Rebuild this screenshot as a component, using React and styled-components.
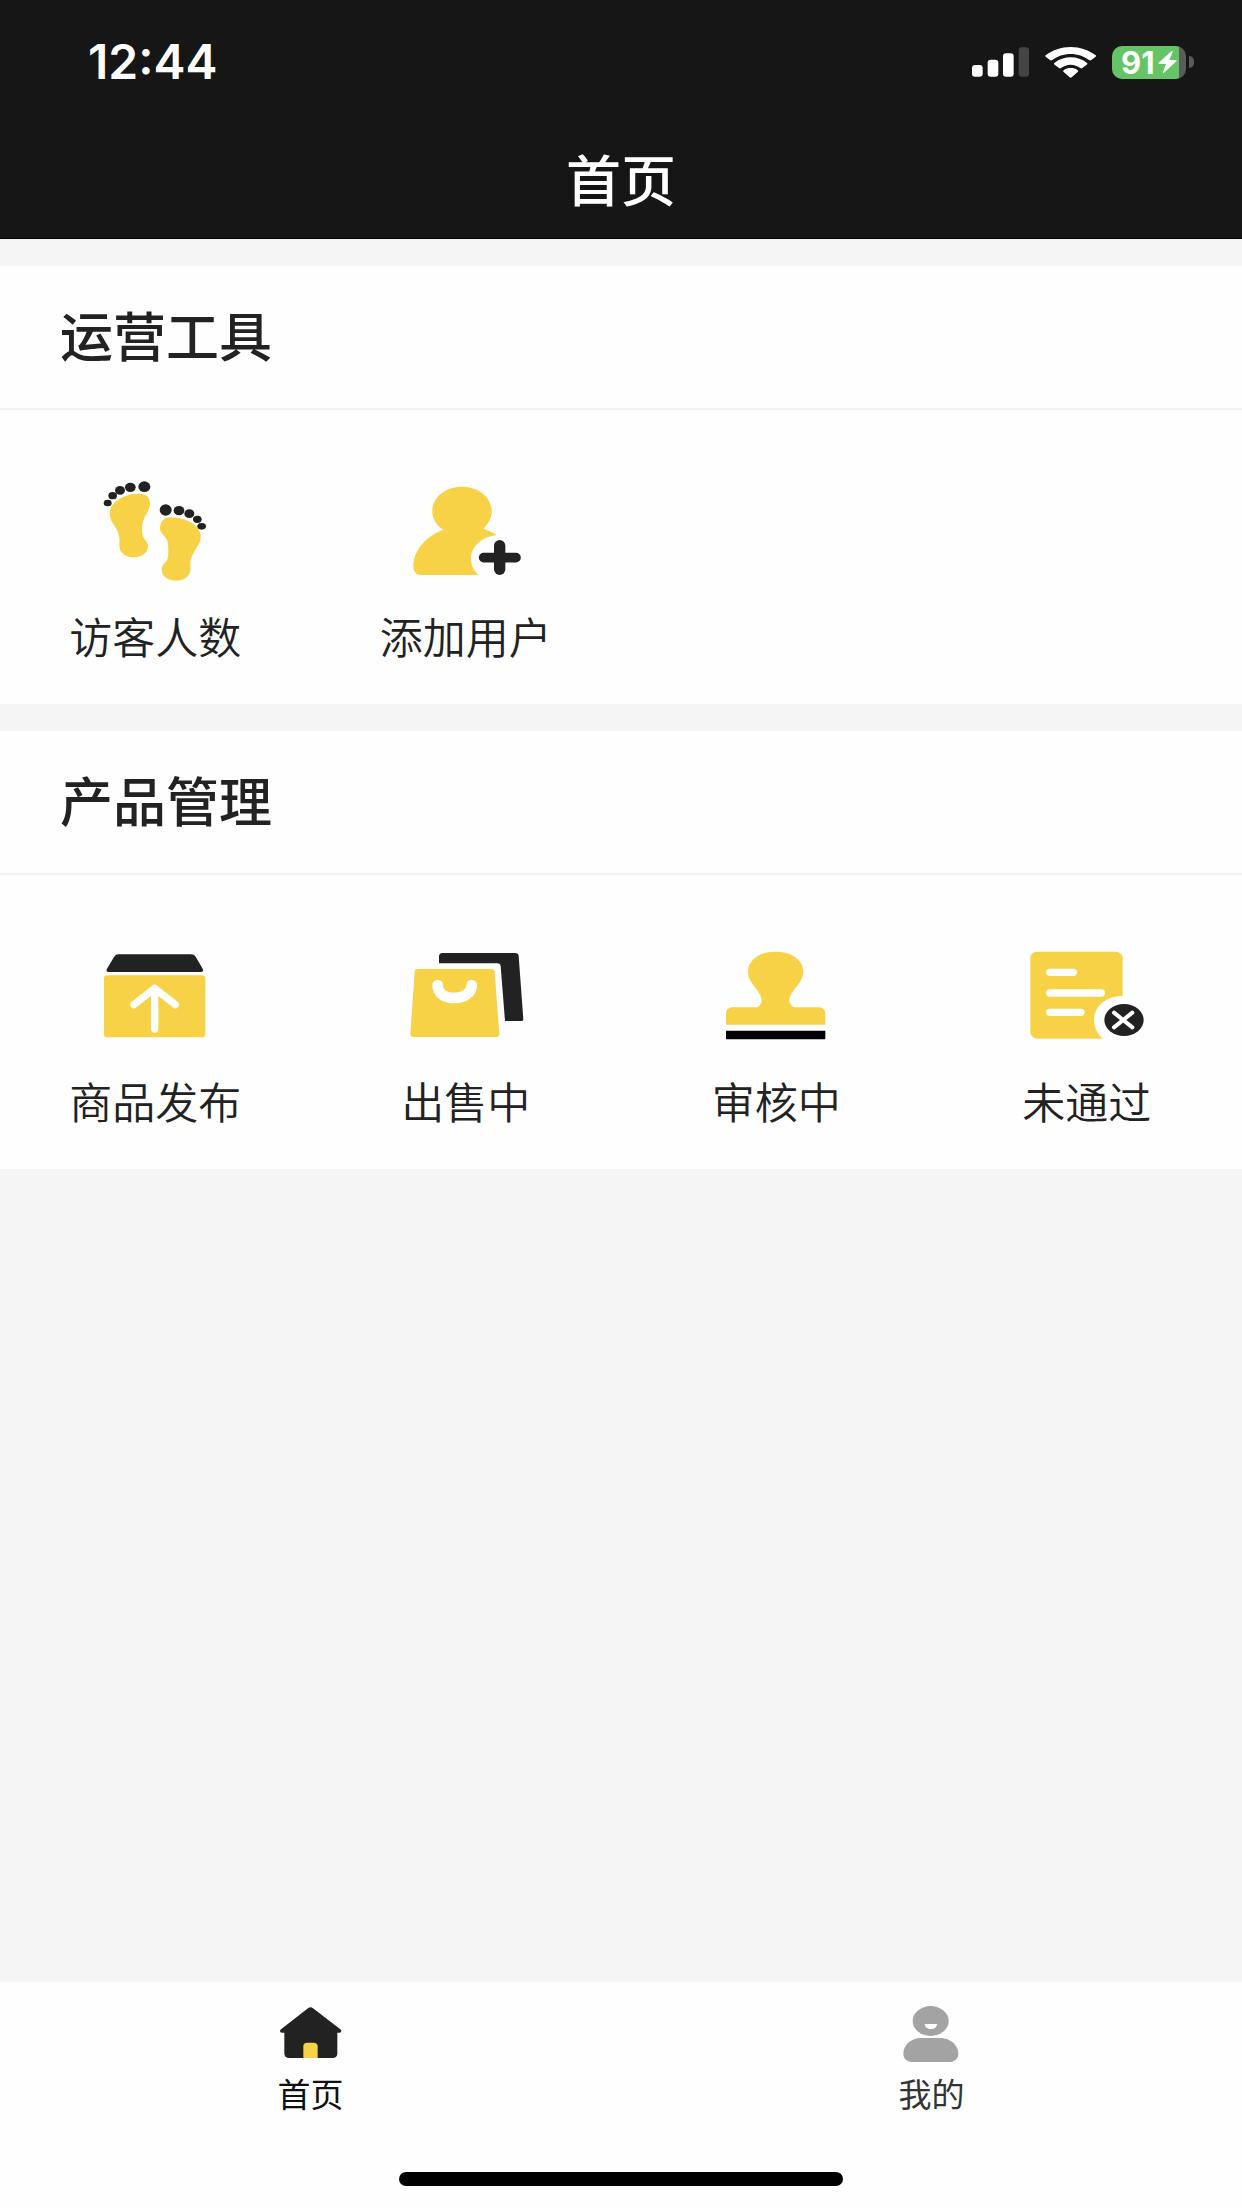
import { useState } from 'react';
import styled, { createGlobalStyle } from 'styled-components';

const GlobalStyle = createGlobalStyle`
  * {
    box-sizing: border-box;
  }

  body {
    margin: 0;
    background: #f5f5f5;
    color: #222;
    font-family: 'Noto Sans CJK SC', 'Noto Sans', sans-serif;
  }
`;

const Page = styled.div`
  min-height: 100vh;
  display: flex;
  flex-direction: column;
`;

const Header = styled.header`
  background: #161616;
  color: #fff;
  border-bottom: 1px solid #000;
`;

const StatusBar = styled.div`
  display: flex;
  align-items: center;
  justify-content: space-between;
  height: 124px;
  padding: 0 48px 0 88px;
  font-family: Inter, 'Liberation Sans', sans-serif;
`;

const Time = styled.time`
  font-size: 48px;
  font-weight: 600;
  line-height: 48px;
`;

const StatusIcons = styled.div`
  display: flex;
  align-items: center;
  gap: 16px;
`;

const Battery = styled.div`
  display: flex;
  align-items: center;
  gap: 3px;
`;

const BatteryBody = styled.div`
  display: flex;
  align-items: center;
  gap: 3px;
  width: 74px;
  height: 33px;
  padding-left: 9px;
  border-radius: 10px;
  background: linear-gradient(to right, #65c466 90%, #5b5b5b 90%);
  font-size: 31px;
  font-weight: 700;
  line-height: 33px;
`;

const BatteryCap = styled.span`
  width: 5px;
  height: 12px;
  border-radius: 0 6px 6px 0;
  background: #5b5b5b;
`;

const NavTitle = styled.h1`
  margin: 0;
  padding: 21px 0 29px;
  font-size: 55px;
  font-weight: 500;
  line-height: 64px;
  text-align: center;
`;

const Main = styled.main`
  flex: 1;
  display: flex;
  flex-direction: column;
  gap: 27px;
  padding: 27px 0;
`;

const Section = styled.section`
  background: #fefefe;
`;

const SectionTitle = styled.h2`
  margin: 0;
  padding: 36px 60px 42px;
  border-bottom: 2px solid #f3f3f3;
  font-size: 53px;
  font-weight: 500;
  line-height: 64px;
`;

const Tools = styled.nav`
  display: grid;
  grid-template-columns: repeat(4, 1fr);
  padding: 62px 0 37px;
`;

const Tool = styled.a`
  display: flex;
  flex-direction: column;
  align-items: center;
  gap: 11px;
  color: #222;
  font-size: 43px;
  font-weight: 350;
  line-height: 64px;
  text-decoration: none;
`;

const ToolIcon = styled.svg`
  width: 120px;
  height: 120px;
`;

const TabBar = styled.footer`
  display: flex;
  flex-direction: column;
  align-items: center;
  gap: 58px;
  padding: 16px 0 22px;
  background: #fefefe;
`;

const Tabs = styled.nav`
  display: flex;
  width: 100%;
`;

const Tab = styled.button`
  flex: 1;
  display: flex;
  flex-direction: column;
  align-items: center;
  gap: 2px;
  padding: 0;
  border: 0;
  background: none;
  color: ${({ $active }) => ($active ? '#111' : '#333')};
  font-family: inherit;
  font-size: 33px;
  font-weight: 400;
  line-height: 42px;
  cursor: pointer;
`;

const TabIcon = styled.svg`
  width: 72px;
  height: 72px;
`;

const HomeIndicator = styled.div`
  width: 444px;
  max-width: 60%;
  height: 14px;
  border-radius: 7px;
  background: #000;
`;

const YELLOW = '#f7d247';
const DARK = '#222';

const SignalIcon = () => (
  <svg width="57" height="30" viewBox="100 83 171 90" fill="#fff">
    <rect x="100" y="137" width="32" height="35" rx="9" />
    <rect x="147" y="121" width="32" height="51" rx="9" />
    <rect x="193" y="102" width="32" height="70" rx="9" />
    <rect x="240" y="84" width="31" height="88" rx="9" fill="#454545" />
  </svg>
);

const WifiIcon = () => (
  <svg width="51" height="31" viewBox="319 80 153 93" fill="#fff">
    <path d="M396 80c28 0 54 9 74 24 3 2 3 4 0 6l-12 9c-2 2-4 2-7 0-15-11-34-18-55-18s-40 7-55 18c-3 2-5 2-7 0l-12-9c-3-2-3-4 0-6 20-15 46-24 74-24z" />
    <path d="M396 111c18 0 35 6 48 16 3 2 3 4 0 6l-13 10c-2 2-4 2-6 0-8-6-18-10-29-10s-21 4-29 10c-2 2-4 2-6 0l-13-10c-3-2-3-4 0-6 13-10 30-16 48-16z" />
    <path d="M396 143c8 0 15 2 20 6 3 2 3 4 1 6l-18 16c-2 2-4 2-6 0l-18-16c-2-2-2-4 1-6 5-4 12-6 20-6z" />
  </svg>
);

const BoltIcon = () => (
  <svg width="19" height="22" viewBox="664 95 57 66" fill="#fff">
    <path d="M704 96 666 130c-2 2-1 4 2 4h20l-9 24c-1 3 1 4 3 2l37-34c2-2 1-4-2-4h-19l10-24c1-3-2-4-4-2z" />
  </svg>
);

const FootprintsIcon = () => (
  <ToolIcon viewBox="106 36 360 360" aria-hidden="true">
    <g fill={YELLOW}>
      <path d="M150 159c0-23 22-42 50-52 15-6 35-8 51-4 13 3 20 15 20 28 0 20-14 32-20 51-4 14-6 33-2 45 4 11 16 17 16 33 0 18-19 32-43 32-25 0-43-15-43-35 0-9 1-15 0-24-2-20-12-31-20-44-6-10-9-20-9-30z" />
      <path d="M301 205c0-14 6-26 18-31 15-5 37-1 54 4 30 10 50 29 50 53 0 16-10 28-18 42-8 13-13 25-13 39 0 6 1 11 0 20-2 17-20 30-43 30-25 0-43-14-43-32 0-14 10-20 16-29 6-10 5-41 1-58-5-15-22-22-22-38z" />
    </g>
    <g fill={DARK}>
      <ellipse cx="144" cy="129" rx="12" ry="10" />
      <ellipse cx="159" cy="107" rx="13" ry="11" />
      <ellipse cx="181" cy="91" rx="15" ry="13" />
      <ellipse cx="212" cy="82" rx="16" ry="14" />
      <ellipse cx="254" cy="80" rx="18" ry="16" />
      <ellipse cx="318" cy="150" rx="18" ry="17" />
      <ellipse cx="358" cy="152" rx="16" ry="14" />
      <ellipse cx="389" cy="161" rx="15" ry="13" />
      <ellipse cx="413" cy="178" rx="13" ry="11" />
      <ellipse cx="426" cy="199" rx="13" ry="10" />
    </g>
  </ToolIcon>
);

const AddUserIcon = () => (
  <ToolIcon viewBox="137 36 360 360" aria-hidden="true">
    <path
      fill={YELLOW}
      d="M305 80c50 0 89 32 89 74 0 20-9 38-25 52 15 4 28 11 41 20-44 3-78 33-78 70 0 19 8 36 23 49H180c-12 0-21-10-21-27 0-45 40-92 90-108-21-14-33-34-33-56 0-42 39-74 89-74z"
    />
    <path d="M418 257v71" stroke={DARK} strokeWidth="34" strokeLinecap="round" />
    <path d="M370 293h97" stroke={DARK} strokeWidth="29" strokeLinecap="round" />
  </ToolIcon>
);

const PublishIcon = () => (
  <ToolIcon viewBox="106 51 360 360" aria-hidden="true">
    <path fill={DARK} d="M177 103h216c7 0 11 2 15 7l21 36c3 6 1 10-6 10H147c-7 0-8-4-5-10l21-35c4-6 8-8 14-8z" />
    <rect x="133" y="166" width="304" height="186" rx="10" fill={YELLOW} />
    <path
      d="M285 327V206M223 254l62-49 62 49"
      fill="none"
      stroke="#fff"
      strokeWidth="22"
      strokeLinecap="round"
      strokeLinejoin="round"
    />
  </ToolIcon>
);

const OnSaleIcon = () => (
  <ToolIcon viewBox="107 51 360 360" aria-hidden="true">
    <path fill={DARK} d="M216 99h218c7 0 11 3 11 9l14 190c0 3-2 5-5 5h-50l-13-164c0-6-4-9-10-9H206v-21c0-6 4-10 10-10z" />
    <path fill={YELLOW} d="M143 147h221c6 0 9 3 9 8l14 187c0 6-3 9-9 9H129c-6 0-10-3-9-9l13-187c0-5 4-8 10-8z" />
    <path
      d="M202 195c0 25 21 39 50 39s52-15 52-39"
      fill="none"
      stroke="#fff"
      strokeWidth="32"
      strokeLinecap="round"
    />
  </ToolIcon>
);

const StampIcon = () => (
  <ToolIcon viewBox="79 51 360 360" aria-hidden="true">
    <path
      fill={YELLOW}
      d="M258 95c49 0 83 26 83 60 0 36-42 57-42 86 0 8 5 15 13 21h74c12 0 21 8 21 19v33H109v-33c0-11 9-19 21-19h74c8-6 12-13 12-21 0-29-41-50-41-86 0-34 34-60 83-60z"
    />
    <path fill="#000" d="M109 332h298v26H109z" />
  </ToolIcon>
);

const RejectedIcon = () => (
  <ToolIcon viewBox="80 51 360 360" aria-hidden="true">
    <path
      fill={YELLOW}
      d="M112 95h232c13 0 23 8 23 18v115c-47-1-86 31-86 71 0 21 9 41 26 57H114c-14 0-24-9-24-21V114c0-11 9-19 22-19z"
    />
    <path d="M148 157h71M148 219h155M148 277h94" stroke="#fff" strokeWidth="22" strokeLinecap="round" />
    <ellipse cx="371" cy="300" rx="59" ry="48" fill={DARK} />
    <path d="M341 278l55 44M396 278l-55 44" stroke="#fff" strokeWidth="12" strokeLinecap="round" />
  </ToolIcon>
);

const HomeIcon = () => (
  <TabIcon viewBox="104 84 216 216" aria-hidden="true">
    <path
      fill={DARK}
      d="M203 115c5-4 10-4 15 0l82 63c5 4 3 10-3 10h-6v63c0 8-6 13-15 13H147c-9 0-15-5-15-13v-63h-7c-6 0-8-6-3-10z"
    />
    <path fill={YELLOW} d="M189 264v-35c0-7 4-11 11-11h20c7 0 12 4 12 11v35z" />
  </TabIcon>
);

const MineIcon = () => (
  <TabIcon viewBox="287 84 216 216" aria-hidden="true">
    <ellipse cx="391" cy="153" rx="54" ry="45" fill="#a3a3a3" />
    <path fill="#fff" d="M373 162h37c0 9-8 15-18 15s-19-6-19-15z" />
    <path fill="#a3a3a3" d="M363 204h56c31 0 55 21 55 47 0 15-11 25-29 25H338c-18 0-29-10-29-25 0-26 23-47 54-47z" />
  </TabIcon>
);

const sections = [
  {
    title: '运营工具',
    tools: [
      { label: '访客人数', icon: <FootprintsIcon /> },
      { label: '添加用户', icon: <AddUserIcon /> },
    ],
  },
  {
    title: '产品管理',
    tools: [
      { label: '商品发布', icon: <PublishIcon /> },
      { label: '出售中', icon: <OnSaleIcon /> },
      { label: '审核中', icon: <StampIcon /> },
      { label: '未通过', icon: <RejectedIcon /> },
    ],
  },
];

const tabs = [
  { id: 'home', label: '首页', icon: <HomeIcon /> },
  { id: 'mine', label: '我的', icon: <MineIcon /> },
];

const App = () => {
  const [tab, setTab] = useState('home');

  return (
    <>
      <GlobalStyle />
      <Page>
        <Header>
          <StatusBar>
            <Time>12:44</Time>
            <StatusIcons>
              <SignalIcon />
              <WifiIcon />
              <Battery>
                <BatteryBody>
                  91
                  <BoltIcon />
                </BatteryBody>
                <BatteryCap />
              </Battery>
            </StatusIcons>
          </StatusBar>
          <NavTitle>首页</NavTitle>
        </Header>

        <Main>
          {sections.map((section) => (
            <Section key={section.title}>
              <SectionTitle>{section.title}</SectionTitle>
              <Tools>
                {section.tools.map((tool) => (
                  <Tool href="#" key={tool.label}>
                    {tool.icon}
                    {tool.label}
                  </Tool>
                ))}
              </Tools>
            </Section>
          ))}
        </Main>

        <TabBar>
          <Tabs>
            {tabs.map((item) => (
              <Tab type="button" key={item.id} $active={tab === item.id} onClick={() => setTab(item.id)}>
                {item.icon}
                {item.label}
              </Tab>
            ))}
          </Tabs>
          <HomeIndicator />
        </TabBar>
      </Page>
    </>
  );
};

export default App;
